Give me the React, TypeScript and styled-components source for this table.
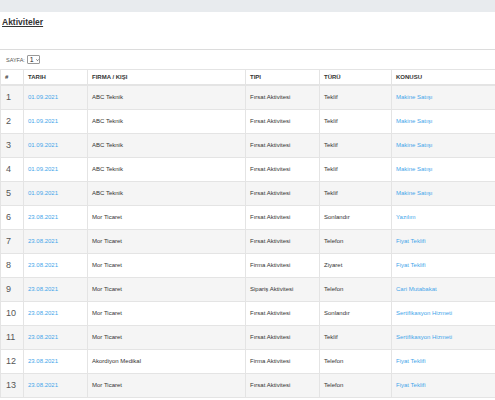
import React from "react";
import styled, { createGlobalStyle } from "styled-components";

const Global = createGlobalStyle`
  html, body { margin: 0; padding: 0; background: #fff; }
  body { font-family: "Liberation Sans", Arial, sans-serif; color: #333; }
`;

const TopBar = styled.div`
  height: 12px;
  background: #e8ebee;
`;

const Title = styled.a`
  display: block;
  margin: 4px 0 0 2px;
  height: 33px;
  font-size: 8.5px;
  font-weight: bold;
  color: #333;
  text-decoration: underline;
  line-height: 13px;
`;

const Panel = styled.div`
  border-top: 1px solid #dcdcdc;
  overflow: hidden;
`;

const Pager = styled.div`
  display: flex;
  align-items: center;
  gap: 2px;
  height: 19px;
  padding-left: 6px;
  font-size: 5.5px;
  color: #555;
`;

const Select = styled.div`
  display: flex;
  align-items: center;
  gap: 2px;
  height: 9px;
  width: 13px;
  padding-left: 2px;
  box-sizing: border-box;
  border: 1px solid #999;
  border-radius: 1px;
  font-size: 7px;
  color: #222;
  background: #fff;
`;

const Table = styled.table`
  width: 506px;
  border-collapse: collapse;
  table-layout: fixed;
`;

const Th = styled.th<{ w: number }>`
  width: ${(p) => p.w}px;
  height: 15px;
  padding: 1px 0 0 4px;
  text-align: left;
  font-size: 6px;
  font-weight: bold;
  color: #333;
  border: 1px solid #e4e4e4;
  border-bottom: 2px solid #e4e4e4;
  box-sizing: border-box;
`;

const Tr = styled.tr<{ odd: boolean }>`
  background: ${(p) => (p.odd ? "#f5f5f5" : "#fff")};
`;

const Td = styled.td<{ big?: boolean; link?: boolean }>`
  height: 23px;
  padding: 0 0 0 ${(p) => (p.big ? 5 : 4)}px;
  font-size: ${(p) => (p.big ? "9px" : "6px")};
  color: ${(p) => (p.link ? "#45a6ea" : p.big ? "#555" : "#333")};
  border: 1px solid #e4e4e4;
  white-space: nowrap;
  overflow: hidden;
`;

const rows = [
  ["01.09.2021", "ABC Teknik", "Fırsat Aktivitesi", "Teklif", "Makine Satışı"],
  ["01.09.2021", "ABC Teknik", "Fırsat Aktivitesi", "Teklif", "Makine Satışı"],
  ["01.09.2021", "ABC Teknik", "Fırsat Aktivitesi", "Teklif", "Makine Satışı"],
  ["01.09.2021", "ABC Teknik", "Fırsat Aktivitesi", "Teklif", "Makine Satışı"],
  ["01.09.2021", "ABC Teknik", "Fırsat Aktivitesi", "Teklif", "Makine Satışı"],
  ["23.08.2021", "Mor Ticaret", "Fırsat Aktivitesi", "Sonlandır", "Yazılım"],
  ["23.08.2021", "Mor Ticaret", "Fırsat Aktivitesi", "Telefon", "Fiyat Teklifi"],
  ["23.08.2021", "Mor Ticaret", "Firma Aktivitesi", "Ziyaret", "Fiyat Teklifi"],
  ["23.08.2021", "Mor Ticaret", "Sipariş Aktivitesi", "Telefon", "Cari Mutabakat"],
  ["23.08.2021", "Mor Ticaret", "Fırsat Aktivitesi", "Sonlandır", "Sertifikasyon Hizmeti"],
  ["23.08.2021", "Mor Ticaret", "Fırsat Aktivitesi", "Teklif", "Sertifikasyon Hizmeti"],
  ["23.08.2021", "Akordiyon Medikal", "Firma Aktivitesi", "Telefon", "Fiyat Teklifi"],
  ["23.08.2021", "Mor Ticaret", "Fırsat Aktivitesi", "Telefon", "Fiyat Teklifi"],
];

const cols: [string, number][] = [
  ["#", 23],
  ["TARIH", 64],
  ["FIRMA / KIŞI", 158],
  ["TIPI", 74],
  ["TÜRÜ", 72],
  ["KONUSU", 115],
];

export default function App() {
  return (
    <>
      <Global />
      <TopBar />
      <Title>Aktiviteler</Title>
      <Panel>
        <Pager>
          <span>SAYFA:</span>
          <Select>
            <span>1</span>
            <svg width="5" height="4" viewBox="0 0 10 8">
              <path d="M1 2 L5 6 L9 2" stroke="#222" strokeWidth="2" fill="none" />
            </svg>
          </Select>
        </Pager>
        <Table>
          <thead>
            <tr>
              {cols.map(([c, w]) => (
                <Th key={c} w={w}>{c}</Th>
              ))}
            </tr>
          </thead>
          <tbody>
            {rows.map((r, i) => (
              <Tr key={i} odd={i % 2 === 0}>
                <Td big>{i + 1}</Td>
                <Td link>{r[0]}</Td>
                <Td>{r[1]}</Td>
                <Td>{r[2]}</Td>
                <Td>{r[3]}</Td>
                <Td link>{r[4]}</Td>
              </Tr>
            ))}
          </tbody>
        </Table>
      </Panel>
    </>
  );
}
